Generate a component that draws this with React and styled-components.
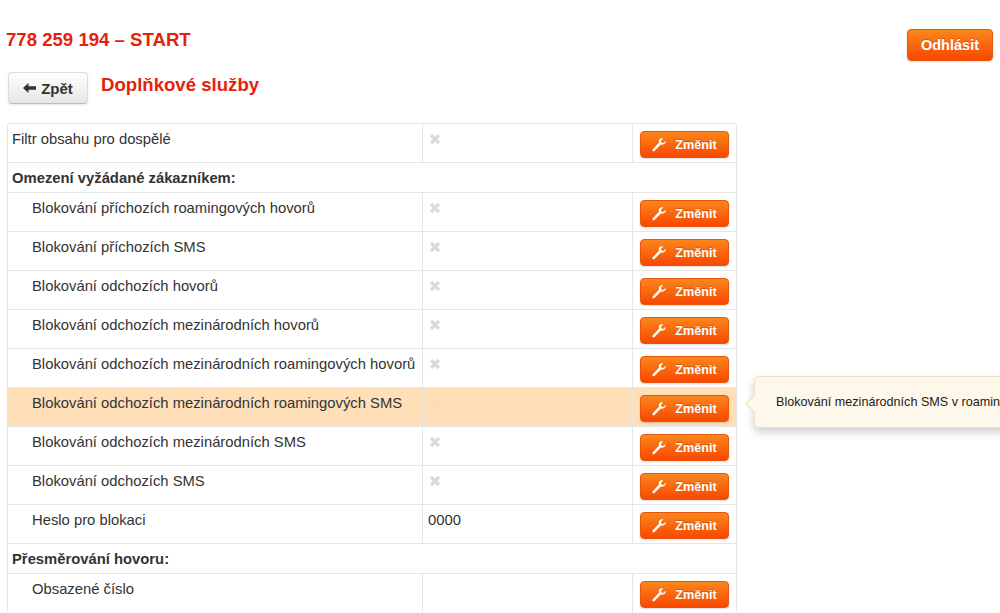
import React from 'react';
import styled, { createGlobalStyle } from 'styled-components';

const GlobalStyle = createGlobalStyle`
  html, body {
    margin: 0;
    padding: 0;
    background: #fff;
    overflow: hidden;
  }
  body {
    font-family: "Liberation Sans", Arial, sans-serif;
    font-size: 14.8px;
    line-height: 20px;
    color: #333;
  }
`;

const Page = styled.div`
  position: relative;
  width: 1000px;
  height: 613px;
  overflow: hidden;
  padding: 29px 7px 0 6px;
  box-sizing: border-box;
`;

const TopBar = styled.header`
  display: flex;
  justify-content: space-between;
  align-items: flex-start;
  height: 43px;
`;

const Title = styled.h1`
  margin: 0;
  font-size: 18.6px;
  line-height: 22px;
  font-weight: bold;
  color: #e7200c;
`;

const SubTitle = styled(Title)`
  margin-top: 2px;
`;

const OrangeButton = styled.button`
  display: inline-flex;
  align-items: center;
  justify-content: center;
  border: 1px solid #e8560c;
  border-radius: 4px;
  background: linear-gradient(to bottom, #fb861c, #f84800);
  color: #fff;
  font-family: inherit;
  font-weight: bold;
  text-shadow: 0 -1px 0 rgba(0, 0, 0, 0.2);
  box-shadow: 0 1px 2px rgba(0, 0, 0, 0.15);
  padding: 0;
  box-sizing: border-box;
`;

const LogoutButton = styled(OrangeButton)`
  width: 86px;
  height: 32px;
  font-size: 14.5px;
`;

const SubBar = styled.div`
  display: flex;
  align-items: flex-start;
  gap: 13px;
  margin-left: 2px;
  height: 51px;
`;

const BackButton = styled.button`
  display: inline-flex;
  align-items: center;
  justify-content: center;
  gap: 5px;
  width: 80px;
  height: 32px;
  padding: 0;
  box-sizing: border-box;
  border: 1px solid #dcdcdc;
  border-bottom-color: #bbb;
  border-radius: 4px;
  background: linear-gradient(to bottom, #fff, #e6e6e6);
  box-shadow: 0 1px 2px rgba(0, 0, 0, 0.1);
  color: #333;
  font-family: inherit;
  font-size: 15px;
  font-weight: bold;
`;

const ServicesTable = styled.table`
  width: 730px;
  margin-left: 1px;
  table-layout: fixed;
  border-collapse: separate;
  border-spacing: 0;
  border: 1px solid #e6e6e6;
  border-radius: 3px;
`;

const Cell = styled.td`
  height: 39px;
  padding: 5px 5px 0;
  box-sizing: border-box;
  vertical-align: top;
  border-bottom: 1px solid #e6e6e6;
  border-left: 1px solid #e6e6e6;
  background: ${(p) => (p.$active ? '#fedfb8' : 'transparent')};
  white-space: nowrap;
  tr:last-child > & {
    border-bottom: 0;
  }
  &:first-child {
    border-left: 0;
    padding-left: ${(p) => (p.$nested ? '24px' : '4px')};
  }
`;

const ActionCell = styled(Cell)`
  padding: 7px 0 0 7px;
`;

const GroupCell = styled.td`
  height: 30px;
  padding: 5px 4px 0;
  box-sizing: border-box;
  vertical-align: top;
  font-weight: bold;
  border-bottom: 1px solid #e6e6e6;
`;

const ChangeButton = styled(OrangeButton)`
  width: 89px;
  height: 27px;
  gap: 9px;
  font-size: 12.6px;
`;

const NoMarkIcon = styled.svg`
  display: block;
  margin: 4px 0 0 1px;
  color: ${(p) => (p.$active ? '#fbdcb6' : '#dadada')};
`;

const Tooltip = styled.div`
  position: absolute;
  left: 754px;
  top: 376px;
  width: 400px;
  height: 52px;
  box-sizing: border-box;
  padding: 16px 21px;
  background: #fdf8ea;
  border: 1px solid #eadfc2;
  border-radius: 5px;
  box-shadow: 0 4px 10px rgba(0, 0, 0, 0.2);
  font-size: 12.6px;
  line-height: 18px;
  color: #222;
  &::before {
    content: '';
    position: absolute;
    left: -7px;
    top: 20px;
    width: 12px;
    height: 12px;
    background: #fdf8ea;
    border-left: 1px solid #eadfc2;
    border-bottom: 1px solid #eadfc2;
    transform: rotate(45deg);
  }
`;

function WrenchIcon() {
  return (
    <svg width="14" height="14" viewBox="0 0 14 14" fill="currentColor">
      <path d="M13.7 2.8 11.3 4.9 9.4 4.5 9 2.7 11.2.6C9.3-.2 7.2.9 6.9 2.7c-.1.7 0 1.3.2 1.9L.8 11.3c-.5.6-.5 1.3 0 1.7.5.5 1.2.4 1.7-.1l6.4-6.4c.7.2 1.4.2 2.1 0 1.9-.6 2.9-2.3 2.7-3.7z" />
    </svg>
  );
}

function BackArrow() {
  return (
    <svg width="13" height="10" viewBox="0 0 13 10" fill="currentColor">
      <path d="M0 5 5.5 0V3.2H13V6.8H5.5V10z" />
    </svg>
  );
}

function NoMark({ active }) {
  return (
    <NoMarkIcon $active={active} width="12" height="12" viewBox="0 0 12 12" stroke="currentColor" strokeWidth="3.2">
      <path d="M2 2 10 10M10 2 2 10" />
    </NoMarkIcon>
  );
}

const rows = [
  { label: 'Filtr obsahu pro dospělé' },
  { group: 'Omezení vyžádané zákazníkem:' },
  { label: 'Blokování příchozích roamingových hovorů', nested: true },
  { label: 'Blokování příchozích SMS', nested: true },
  { label: 'Blokování odchozích hovorů', nested: true },
  { label: 'Blokování odchozích mezinárodních hovorů', nested: true },
  { label: 'Blokování odchozích mezinárodních roamingových hovorů', nested: true },
  { label: 'Blokování odchozích mezinárodních roamingových SMS', nested: true, active: true },
  { label: 'Blokování odchozích mezinárodních SMS', nested: true },
  { label: 'Blokování odchozích SMS', nested: true },
  { label: 'Heslo pro blokaci', nested: true, value: '0000' },
  { group: 'Přesměrování hovoru:' },
  { label: 'Obsazené číslo', nested: true, value: '' },
];

function App() {
  return (
    <Page>
      <GlobalStyle />
      <TopBar>
        <Title>778 259 194 – START</Title>
        <LogoutButton>Odhlásit</LogoutButton>
      </TopBar>
      <SubBar>
        <BackButton><BackArrow /> Zpět</BackButton>
        <SubTitle as="h2">Doplňkové služby</SubTitle>
      </SubBar>
      <ServicesTable>
        <colgroup>
          <col style={{ width: 414 }} />
          <col style={{ width: 210 }} />
          <col style={{ width: 104 }} />
        </colgroup>
        <tbody>
          {rows.map((row) => row.group ? (
            <tr key={row.group}><GroupCell colSpan={3}>{row.group}</GroupCell></tr>
          ) : (
            <tr key={row.label}>
              <Cell $nested={row.nested} $active={row.active}>{row.label}</Cell>
              <Cell $active={row.active}>
                {row.value === undefined ? <NoMark active={row.active} /> : row.value}
              </Cell>
              <ActionCell $active={row.active}>
                <ChangeButton><WrenchIcon /> Změnit</ChangeButton>
              </ActionCell>
            </tr>
          ))}
        </tbody>
      </ServicesTable>
      <Tooltip>Blokování mezinárodních SMS v roamingu</Tooltip>
    </Page>
  );
}

export default App;
